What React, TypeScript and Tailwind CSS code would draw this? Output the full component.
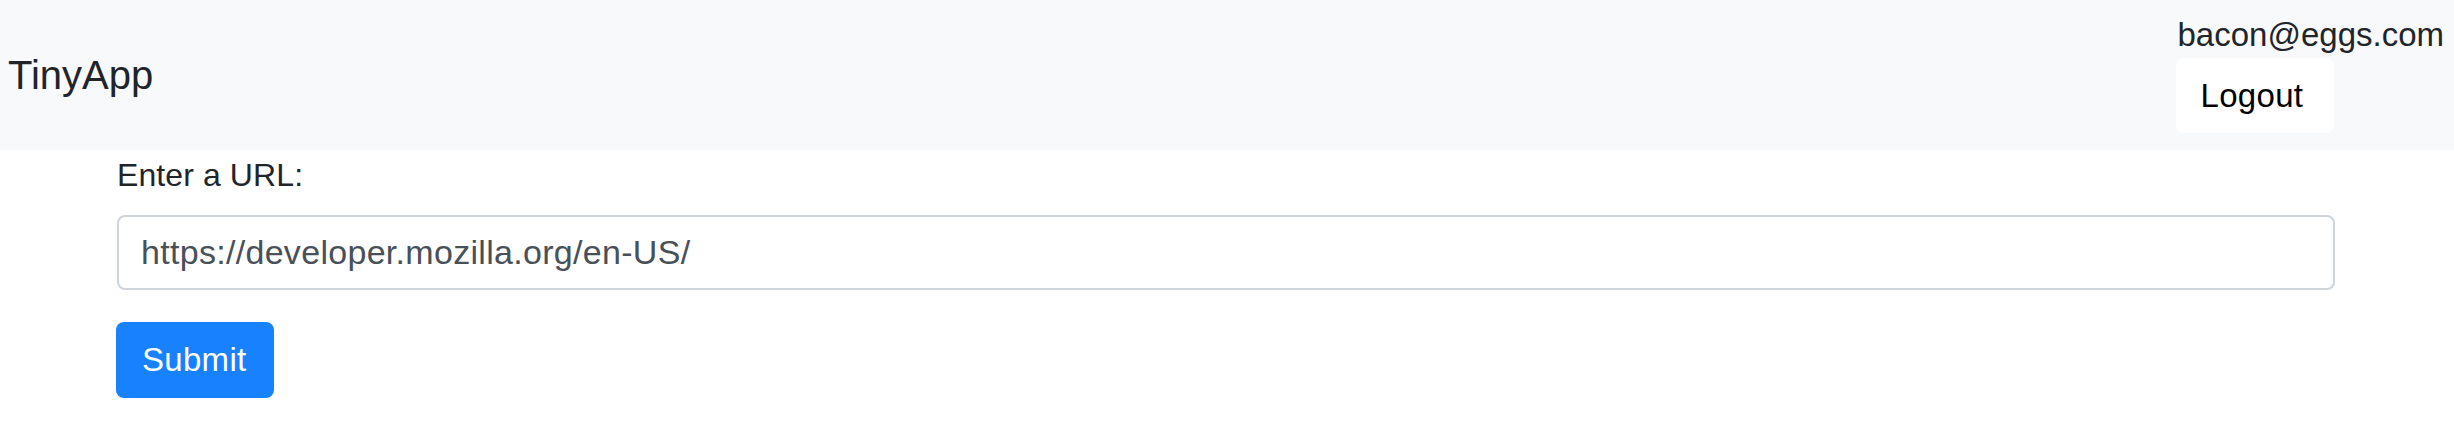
export default function App() {
  return (
    <div className="min-h-screen bg-white font-['Liberation_Sans',Arial,sans-serif] text-[#212529]">
      <nav className="flex h-[150px] items-center justify-between bg-[#f8f9fa] pl-[8px] pr-[10px]">
        <a href="/" className="text-[40px] leading-[60px] text-[#212529]">
          TinyApp
        </a>
        <div className="flex h-full flex-col items-start pt-[15px]">
          <span className="ml-[1px] text-[33px] leading-[40px]">bacon@eggs.com</span>
          <button
            type="button"
            className="-ml-px mt-[3px] h-[75px] w-[158px] rounded-[8px] bg-white pl-[25px] text-left text-[33px] tracking-[0.3px] text-black"
          >
            Logout
          </button>
        </div>
      </nav>
      <main className="pl-[117px] pr-[119px] pt-px">
        <form className="flex flex-col items-start">
          <label htmlFor="longURL" className="text-[32px] tracking-[0.1px] leading-[48px]">
            Enter a URL:
          </label>
          <input
            id="longURL"
            type="text"
            defaultValue="https://developer.mozilla.org/en-US/"
            className="mt-[16px] h-[75px] w-full rounded-[8px] border-2 border-[#ced4da] bg-white pl-[22px] text-[34px] tracking-[0.3px] text-[#495057] outline-none"
          />
          <button
            type="submit"
            className="-ml-px mt-[32px] h-[76px] w-[158px] rounded-[8px] bg-[#1781fe] pl-[26px] text-left text-[33px] tracking-[0.3px] text-white"
          >
            Submit
          </button>
        </form>
      </main>
    </div>
  );
}
